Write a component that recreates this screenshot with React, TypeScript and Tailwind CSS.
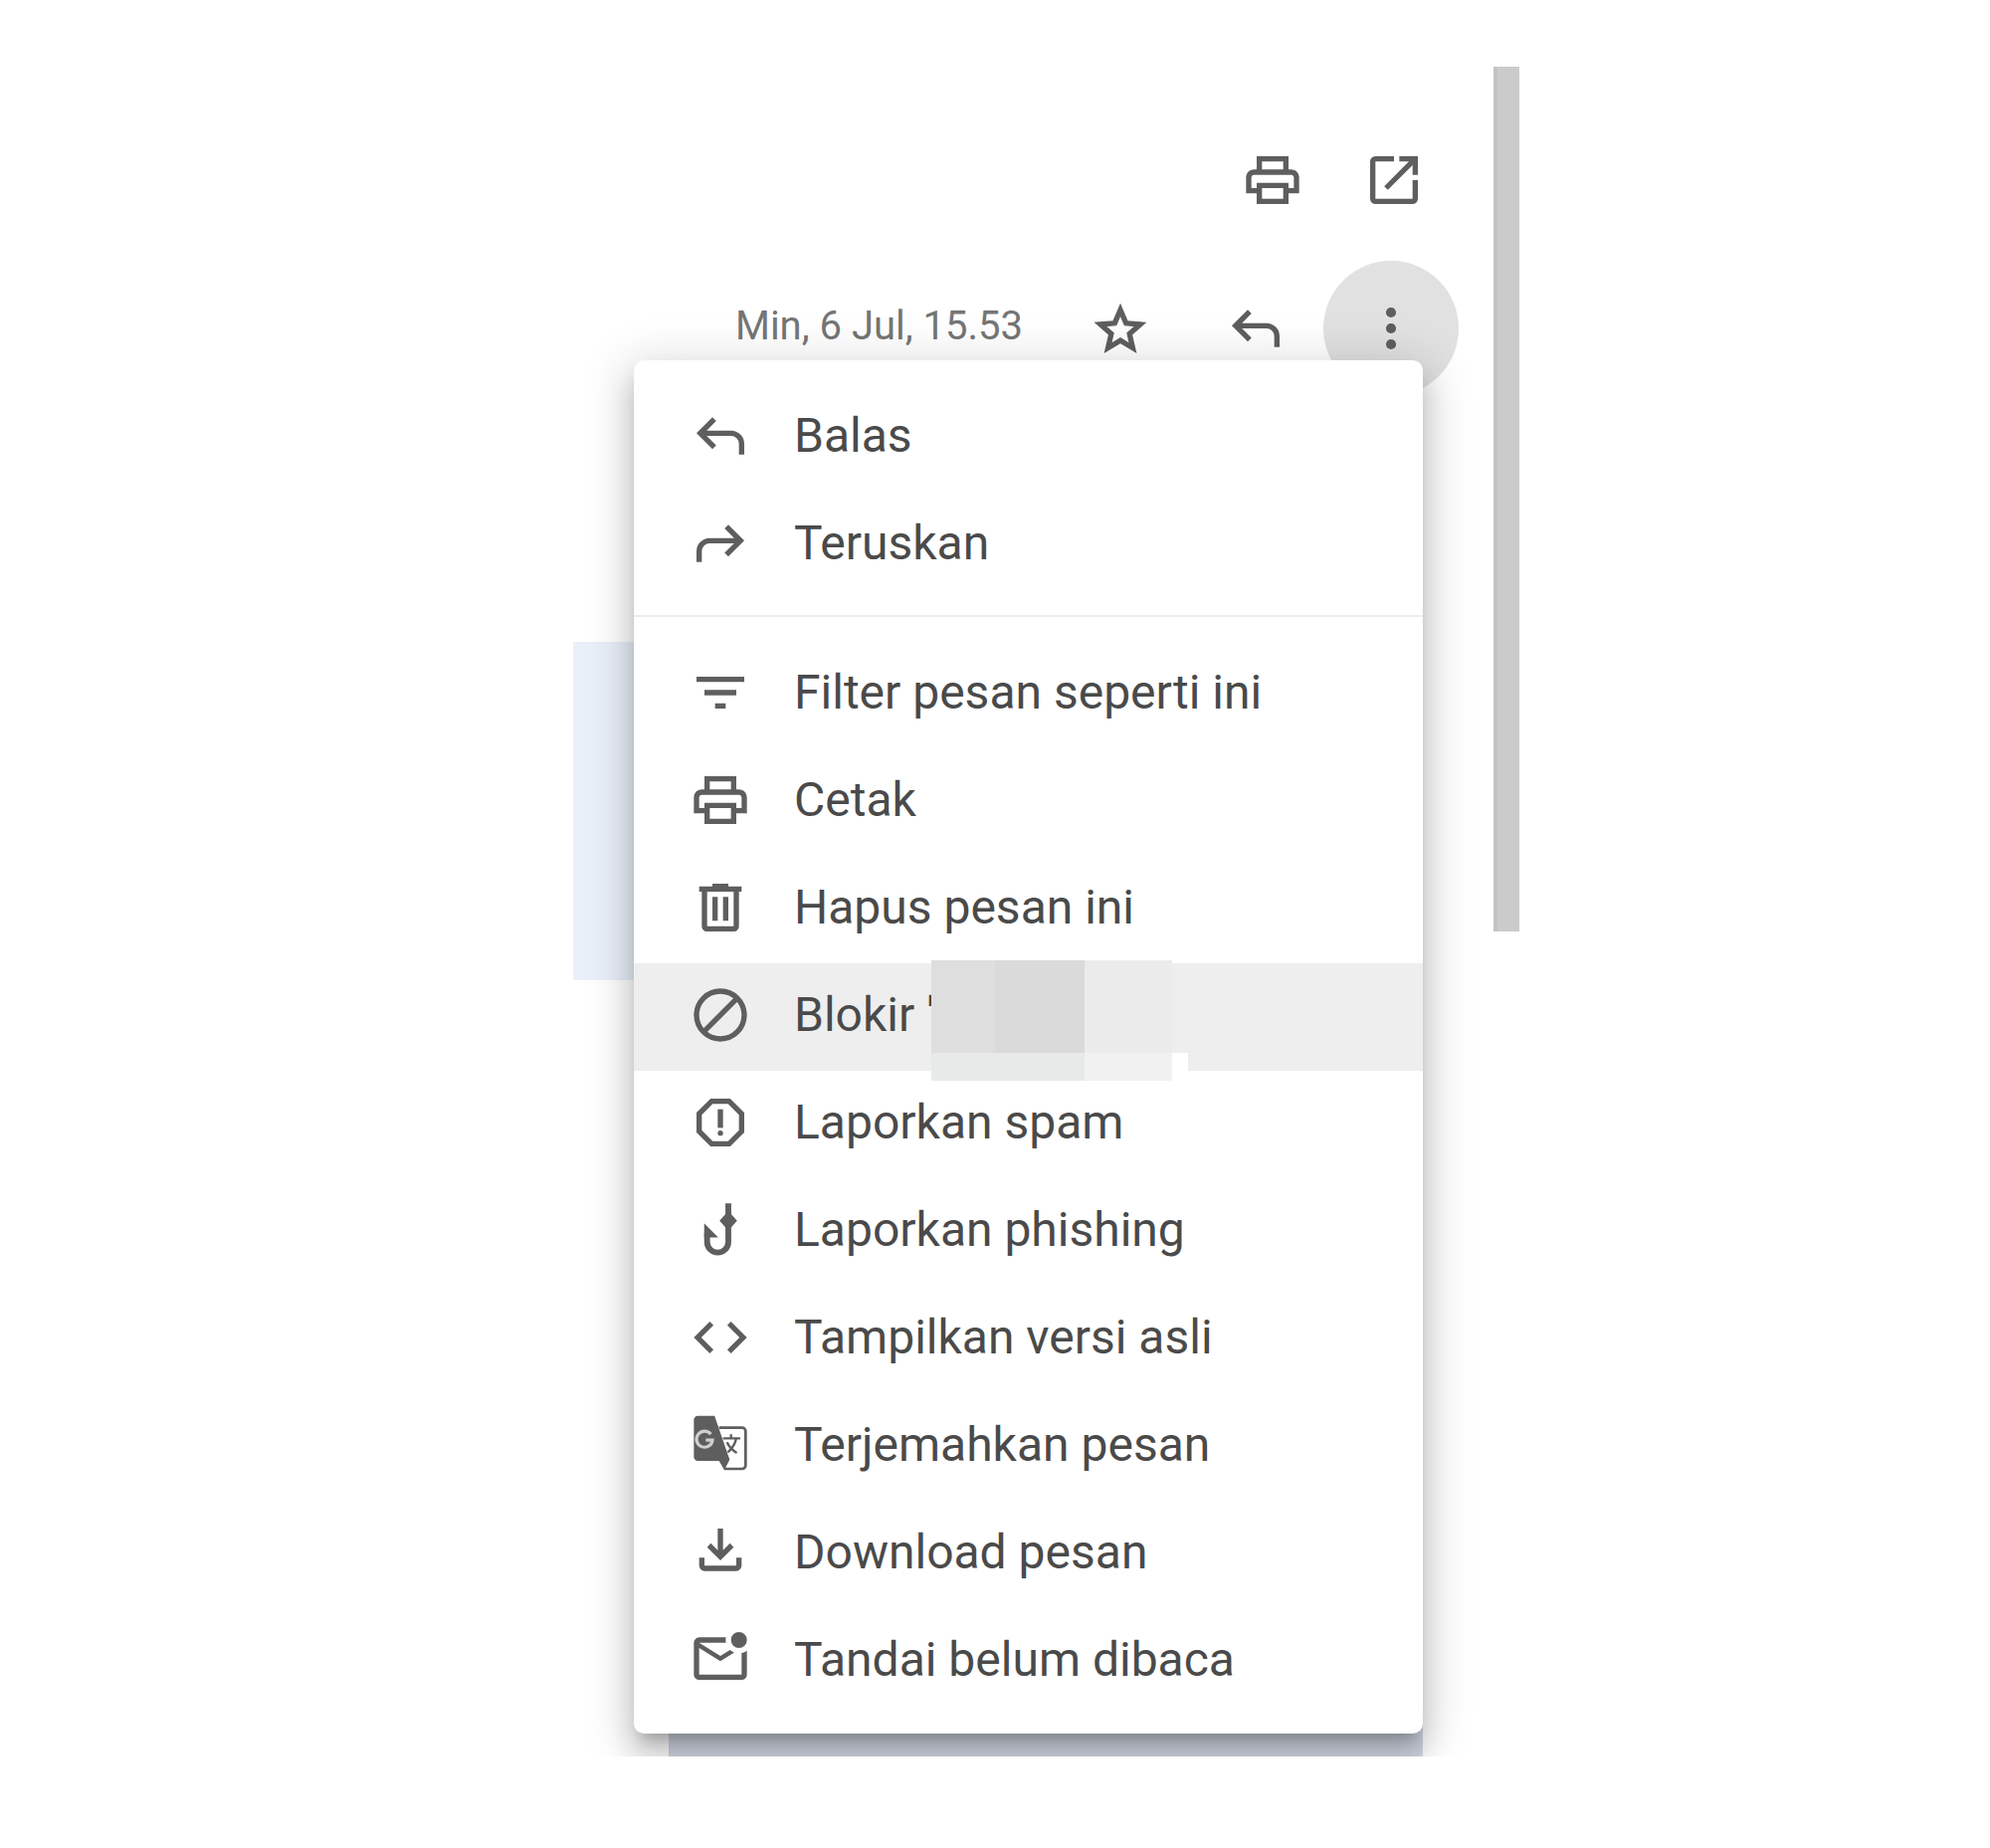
import type { ReactNode } from 'react';
import clsx from 'clsx';

interface IconProps {
  children: ReactNode;
  viewBox?: string;
  className?: string;
}

function Icon({ children, viewBox = '0 0 24 24', className = 'size-16' }: IconProps) {
  return (
    <svg viewBox={viewBox} className={clsx('shrink-0 fill-current', className)} aria-hidden="true">
      {children}
    </svg>
  );
}

const SYMBOL_BOX = '0 -960 960 960';

function ReplyIcon() {
  return (
    <Icon viewBox={SYMBOL_BOX}>
      <path d="M760-200v-160q0-50-35-85t-85-35H273l144 144-57 56-240-240 240-240 57 56-144 144h367q83 0 141.500 58.500T840-360v160h-80Z" />
    </Icon>
  );
}

function ForwardIcon() {
  return (
    <Icon viewBox={SYMBOL_BOX}>
      <path d="M120-200v-160q0-83 58.500-141.500T320-560h367L543-704l57-56 240 240-240 240-57-56 144-144H320q-50 0-85 35t-35 85v160h-80Z" />
    </Icon>
  );
}

function FilterIcon() {
  return (
    <Icon>
      <path d="M10 18h4v-2h-4v2zM3 6v2h18V6H3zm3 7h12v-2H6v2z" />
    </Icon>
  );
}

function PrintIcon() {
  return (
    <Icon>
      <path d="M19 8h-1V3H6v5H5c-1.660 0-3 1.340-3 3v6h4v4h12v-4h4v-6c0-1.660-1.340-3-3-3zM8 5h8v3H8V5zm8 14H8v-4h8v4zm2-4v-2H6v2H4v-4c0-.55.45-1 1-1h14c.55 0 1 .45 1 1v4h-2z" />
    </Icon>
  );
}

function OpenIcon() {
  return (
    <Icon viewBox={SYMBOL_BOX}>
      <path d="M200-120q-33 0-56.500-23.500T120-200v-560q0-33 23.500-56.500T200-840h280v80H200v560h560v-280h80v280q0 33-23.500 56.500T760-120H200Zm188-212-56-56 372-372H560v-80h280v280h-80v-144L388-332Z" />
    </Icon>
  );
}

function StarIcon() {
  return (
    <Icon className="size-[60px]">
      <path
        d="M22 9.740l-7.190-.62L12 2.500 9.190 9.130 2 9.740l5.460 4.730-1.640 7.030L12 17.770l6.180 3.730-1.630-7.030L22 9.740zM12 15.900l-3.760 2.270 1-4.280-3.320-2.880 4.380-.38L12 6.600l1.710 4.040 4.380.38-3.320 2.880 1 4.280L12 15.900z"
        stroke="currentColor"
        strokeWidth=".5"
      />
    </Icon>
  );
}

function MoreIcon() {
  return (
    <Icon>
      <circle cx="12" cy="6" r="1.900" />
      <circle cx="12" cy="12" r="1.900" />
      <circle cx="12" cy="18" r="1.900" />
    </Icon>
  );
}

function TrashIcon() {
  return (
    <Icon>
      <path d="M15 4V3H9v1H4v2h1v13c0 1.100.9 2 2 2h10c1.100 0 2-.9 2-2V6h1V4h-5zm2 15H7V6h10v13zM9 8h2v9H9zm4 0h2v9h-2z" />
    </Icon>
  );
}

function BlockIcon() {
  return (
    <Icon>
      <circle cx="12" cy="12" r="9" fill="none" stroke="currentColor" strokeWidth="2" />
      <path d="M5.800 18.200 18.200 5.800" stroke="currentColor" strokeWidth="2" />
    </Icon>
  );
}

function SpamIcon() {
  return (
    <Icon>
      <path d="M15.730 3H8.270L3 8.270v7.460L8.270 21h7.460L21 15.730V8.270L15.730 3zM19 14.900L14.900 19H9.100L5 14.900V9.100L9.100 5h5.800L19 9.100v5.800z" />
      <path d="M11 7h2v7h-2z" />
      <circle cx="12" cy="16" r="1" />
    </Icon>
  );
}

function PhishingIcon() {
  return (
    <Icon>
      <path d="M15 2v14.500a4 4 0 0 1-8 0V13" fill="none" stroke="currentColor" strokeWidth="2.200" />
      <path d="M5.900 9.500l5.300 5.300H5.900zM15 4.800l3.300 3.700-3.300 3.700-3.300-3.700z" />
    </Icon>
  );
}

function CodeIcon() {
  return (
    <Icon>
      <path d="M9.400 16.600L4.800 12l4.600-4.600L8 6l-6 6 6 6 1.400-1.400zm5.200 0l4.600-4.600-4.600-4.600L16 6l6 6-6 6-1.400-1.400z" />
    </Icon>
  );
}

function TranslateIcon() {
  return (
    <Icon>
      <path d="M11.500 5.500h8.700c.7 0 1.300.6 1.300 1.300v12.900c0 .7-.6 1.300-1.300 1.300h-6.700" fill="none" stroke="currentColor" />
      <path d="M3.500 1h6.300l5.700 16.500-2 4L11.500 18h-8C2.700 18 2 17.300 2 16.500v-14C2 1.700 2.700 1 3.500 1z" />
      <path d="M8.400 8a3 3 0 1 0 .6 2.200H6.500" fill="none" stroke="#fff" strokeWidth="1.200" opacity=".7" />
      <path d="M13 9.500h6.500M16 8v1.500M18 9.500c-.5 2.500-1.700 4-3.200 5.300M14.500 11c.8 1.800 2 3 3.700 4" fill="none" stroke="currentColor" strokeWidth=".9" />
    </Icon>
  );
}

function DownloadIcon() {
  return (
    <Icon viewBox="0 -920 960 960">
      <path d="M480-320 280-520l56-58 104 104v-326h80v326l104-104 56 58-200 200ZM240-160q-33 0-56.500-23.500T160-240v-120h80v120h480v-120h80v120q0 33-23.500 56.500T720-160H240Z" />
    </Icon>
  );
}

function UnreadIcon() {
  return (
    <Icon viewBox="0 -940 960 960">
      <path d="M160-160q-33 0-56.500-23.500T80-240v-480q0-33 23.500-56.500T160-800h404q-4 20-4 40t4 40H160l320 200 146-91q14 13 30.500 22.500T691-572L480-440 160-640v400h640v-324q23-5 43-14t37-22v360q0 33-23.500 56.500T800-160H160Zm600-480q-50 0-85-35t-35-85q0-50 35-85t85-35q50 0 85 35t35 85q0 50-35 85t-85 35Z" />
    </Icon>
  );
}

interface MenuEntry {
  label: string;
  icon: ReactNode;
  active?: boolean;
}

const replyEntries: MenuEntry[] = [
  { label: 'Balas', icon: <ReplyIcon /> },
  { label: 'Teruskan', icon: <ForwardIcon /> },
];

const messageEntries: MenuEntry[] = [
  { label: 'Filter pesan seperti ini', icon: <FilterIcon /> },
  { label: 'Cetak', icon: <PrintIcon /> },
  { label: 'Hapus pesan ini', icon: <TrashIcon /> },
  { label: "Blokir '", icon: <BlockIcon />, active: true },
  { label: 'Laporkan spam', icon: <SpamIcon /> },
  { label: 'Laporkan phishing', icon: <PhishingIcon /> },
  { label: 'Tampilkan versi asli', icon: <CodeIcon /> },
  { label: 'Terjemahkan pesan', icon: <TranslateIcon /> },
  { label: 'Download pesan', icon: <DownloadIcon /> },
  { label: 'Tandai belum dibaca', icon: <UnreadIcon /> },
];

function NameMask() {
  return (
    <span className="absolute -top-[3px] left-[299px] z-10 flex h-[121px]" aria-hidden="true">
      <span className="flex w-16 flex-col bg-[#dedede]">
        <span className="mt-auto h-7 bg-[#e8e9e9]" />
      </span>
      <span className="flex w-[90px] flex-col bg-[#dadada]">
        <span className="mt-auto h-7 bg-[#e8e9e9]" />
      </span>
      <span className="flex w-[88px] flex-col bg-[#ebebeb]">
        <span className="mt-auto h-7 bg-[#f1f1f1]" />
      </span>
      <span className="mt-auto h-7 w-4 bg-white" />
    </span>
  );
}

function MenuRow({ label, icon, active }: MenuEntry) {
  return (
    <li role="none" className="relative">
      <button
        type="button"
        role="menuitem"
        className={clsx(
          'flex h-[108px] w-full items-center gap-[42px] pb-1 pl-[55px] text-left text-[48px] leading-[56px]',
          active && 'bg-[#eeeeee]',
        )}
      >
        <span className="text-[#5e5e5e]">{icon}</span>
        {label}
      </button>
      {active && <NameMask />}
    </li>
  );
}

function MessageMenu() {
  return (
    <div
      role="menu"
      className="relative -mt-9 mr-[97px] ml-[61px] rounded-[10px] bg-white pt-6 pb-[18px] text-[#4a4a4a] shadow-[0_13px_13px_-8px_rgba(0,0,0,0.2),0_21px_27px_3px_rgba(0,0,0,0.14),0_8px_48px_8px_rgba(0,0,0,0.14)]"
    >
      <ul role="none">
        {replyEntries.map((entry) => (
          <MenuRow key={entry.label} {...entry} />
        ))}
      </ul>
      <hr className="mt-4 mb-6 border-t-2 border-[#ececec]" />
      <ul role="none">
        {messageEntries.map((entry) => (
          <MenuRow key={entry.label} {...entry} />
        ))}
      </ul>
    </div>
  );
}

const rowButton = 'flex size-[136px] items-center justify-center rounded-full';

export default function App() {
  return (
    <div className="flex min-h-screen justify-center bg-white pt-[67px] pl-[103px] font-[Roboto,sans-serif]">
      <main className="relative w-full max-w-[951px] self-start overflow-hidden bg-white pt-[53px] pb-[23px]">
        <div className="absolute top-[578px] left-0 h-[340px] w-20 bg-[#eaf0f9]" />
        <div className="absolute right-[97px] bottom-0 left-[96px] h-10 bg-[#d3d8e4]" />
        <div className="absolute top-0 right-0 h-[869px] w-[26px] border-l-4 border-[#c3c3c3] bg-[#cbcbcb]" />

        <div className="flex justify-end pr-[65px] text-[#5e5e5e]">
          <button type="button" aria-label="Cetak semua" className="flex size-[122px] items-center justify-center">
            <PrintIcon />
          </button>
          <button type="button" aria-label="Di jendela baru" className="flex size-[122px] items-center justify-center">
            <OpenIcon />
          </button>
        </div>

        <div className="mt-5 flex items-center justify-end pr-[61px] text-[#5e5e5e]">
          <time className="mr-[30px] pb-1 text-[40px] leading-[48px] text-[#757575]">Min, 6 Jul, 15.53</time>
          <button type="button" aria-label="Beri bintang" className={rowButton}>
            <StarIcon />
          </button>
          <button type="button" aria-label="Balas" className={rowButton}>
            <ReplyIcon />
          </button>
          <button type="button" aria-label="Lainnya" className={clsx(rowButton, 'bg-[#e1e1e1]')}>
            <MoreIcon />
          </button>
        </div>

        <MessageMenu />
      </main>
    </div>
  );
}
